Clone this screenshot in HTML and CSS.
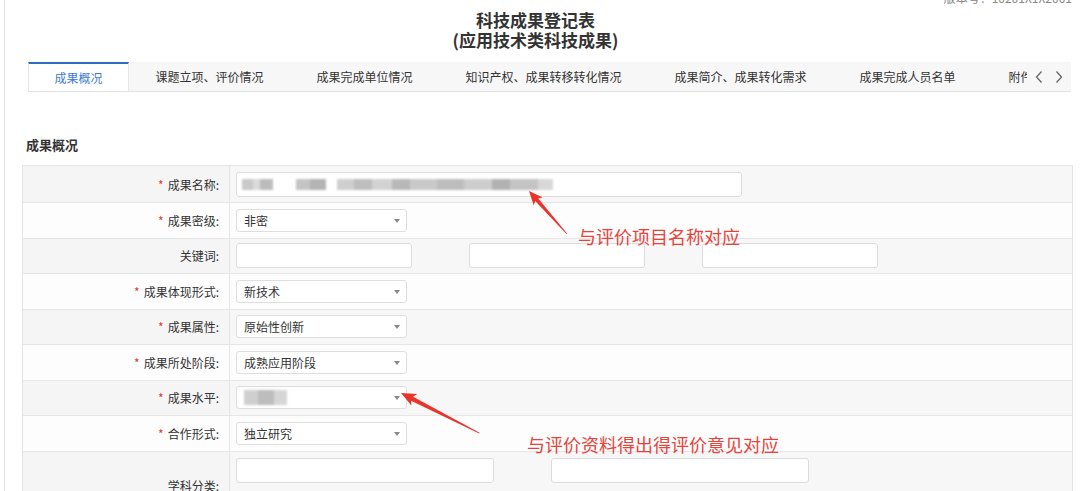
FILE: index.html
```html
<!DOCTYPE html>
<html lang="zh-CN">
<head>
  <meta charset="UTF-8" />
  <meta name="viewport" content="width=device-width, initial-scale=1.0"/>
  <title>科技成果登记表</title>
  <link rel="stylesheet" href="styles.css">
</head>
<body>
  <div class="page">
    <div class="version">版本号：10201X1X2001</div>

    <div class="title">
      <div>科技成果登记表</div>
      <div>(应用技术类科技成果)</div>
    </div>

    <div class="tabs">
      <div class="tab-list">
        <div class="tab active">成果概况</div>
        <div class="tab">课题立项、评价情况</div>
        <div class="tab">成果完成单位情况</div>
        <div class="tab">知识产权、成果转移转化情况</div>
        <div class="tab">成果简介、成果转化需求</div>
        <div class="tab">成果完成人员名单</div>
        <div class="tab">附件</div>
      </div>
      <div class="tab-arrows">
        <svg width="10" height="14" viewBox="0 0 10 14"><polyline points="7.5,1.5 2.5,7 7.5,12.5" /></svg>
        <svg width="10" height="14" viewBox="0 0 10 14"><polyline points="2.5,1.5 7.5,7 2.5,12.5" /></svg>
      </div>
    </div>

    <h3 class="section-title">成果概况</h3>

    <div class="form-table">
      <div class="row first gray">
        <div class="label"><span class="req">*</span>成果名称:</div>
        <div class="value">
          <div class="input name-input"><span class="mosaic"></span></div>
        </div>
      </div>
      <div class="row">
        <div class="label"><span class="req">*</span>成果密级:</div>
        <div class="value"><div class="select">非密</div></div>
      </div>
      <div class="row gray">
        <div class="label">关键词:</div>
        <div class="value">
          <div class="input kw"></div>
          <div class="input kw"></div>
          <div class="input kw"></div>
        </div>
      </div>
      <div class="row">
        <div class="label"><span class="req">*</span>成果体现形式:</div>
        <div class="value"><div class="select">新技术</div></div>
      </div>
      <div class="row gray">
        <div class="label"><span class="req">*</span>成果属性:</div>
        <div class="value"><div class="select">原始性创新</div></div>
      </div>
      <div class="row">
        <div class="label"><span class="req">*</span>成果所处阶段:</div>
        <div class="value"><div class="select">成熟应用阶段</div></div>
      </div>
      <div class="row gray">
        <div class="label"><span class="req">*</span>成果水平:</div>
        <div class="value"><div class="select"><span class="mosaic-small"></span></div></div>
      </div>
      <div class="row">
        <div class="label"><span class="req">*</span>合作形式:</div>
        <div class="value"><div class="select">独立研究</div></div>
      </div>
      <div class="row tall gray">
        <div class="label">学科分类:</div>
        <div class="value stack">
          <div class="line">
            <div class="input subj"></div>
            <div class="input subj"></div>
          </div>
          <div class="line">
            <div class="input subj"></div>
            <div class="input subj"></div>
          </div>
        </div>
      </div>
    </div>
  </div>

  <!-- annotations drawn on top of the screenshot -->
  <svg class="marks" width="1080" height="491" viewBox="0 0 1080 491">
    <g transform="translate(529 191) rotate(-131.5)">
      <polygon points="0,0 -14,-6 -11.5,-2 -57,-0.4 -57,0.4 -11.5,2 -14,6" />
    </g>
    <g transform="translate(401 393) rotate(-152.9)">
      <polygon points="0,0 -15,-6.5 -12.5,-2.2 -88,-0.5 -88,0.5 -12.5,2.2 -15,6.5" />
    </g>
  </svg>
  <div class="note note-name">与评价项目名称对应</div>
  <div class="note note-level">与评价资料得出得评价意见对应</div>
</body>
</html>
```

FILE: styles.css
```css
body {
  margin: 0;
  font-family: "Noto Sans CJK SC", "Liberation Sans", sans-serif;
  font-size: 12px;
  color: #333;
  background: #fff;
  overflow: hidden;
}
.page {
  position: relative;
  margin-left: 4px;
  border-left: 1px solid #e3e3e3;
  padding: 0 7px 0 17px;
  height: 491px;
  box-sizing: border-box;
}
.version {
  position: absolute;
  top: -9px;
  right: 8px;
  font-size: 12px;
  line-height: 14px;
  color: #888;
}
.title {
  padding: 10px 24px 0 0;
  height: 53px;
  box-sizing: border-box;
  text-align: center;
  font-size: 17px;
  font-weight: bold;
  line-height: 20px;
  color: #333;
}
.tabs {
  display: flex;
  margin: 9px 2px 0 6px;
  height: 29px;
  background: #f7f7f7;
  border-bottom: 1px solid #e2e2e2;
}
.tab-list {
  flex: 1;
  display: flex;
  overflow: hidden;
}
.tab {
  flex-shrink: 0;
  padding: 0 26.5px;
  line-height: 29px;
  white-space: nowrap;
  color: #333;
}
.tab.active {
  padding: 0 25.5px 1px;
  line-height: 27px;
  margin-bottom: -1px;
  background: #fff;
  color: #3b7bd3;
  border-top: 2px solid #2d6cc2;
  border-left: 1px solid #e6e6e6;
  border-right: 1px solid #e6e6e6;
}
.tab-arrows {
  width: 44px;
  display: flex;
  align-items: center;
  justify-content: center;
  gap: 10px;
}
.tab-arrows polyline {
  fill: none;
  stroke: #666;
  stroke-width: 1.3;
}
.section-title {
  margin: 43px 0 10px 4px;
  font-size: 13px;
  line-height: 20px;
  font-weight: bold;
  color: #333;
}
.form-table {
  border: 1px solid #e4e4e4;
  border-bottom: none;
}
.row {
  display: flex;
  height: 35.5px;
  box-sizing: border-box;
  border-bottom: 1px solid #e6e6e6;
  background: #fdfdfd;
}
.row.gray {
  background: #f7f7f8;
}
.row.first {
  height: 37px;
}
.row.tall {
  height: 68px;
}
.label {
  width: 207px;
  flex-shrink: 0;
  box-sizing: border-box;
  padding-right: 10px;
  border-right: 1px solid #e6e6e6;
  display: flex;
  align-items: center;
  justify-content: flex-end;
  color: #333;
}
.row.gray .label {
  background: #f5f5f5;
}
.req {
  color: #e03a2f;
  margin-right: 4px;
}
.value {
  flex: 1;
  display: flex;
  align-items: center;
  gap: 57px;
  padding-left: 6px;
}
.value.stack {
  flex-direction: column;
  align-items: flex-start;
  justify-content: flex-start;
  gap: 10px;
  padding-top: 6px;
}
.line {
  display: flex;
  gap: 57px;
}
.input {
  height: 25px;
  box-sizing: border-box;
  border: 1px solid #dcdcdc;
  border-radius: 3px;
  background: #fff;
}
.name-input {
  width: 506px;
  display: flex;
  align-items: center;
  padding-left: 5px;
}
.mosaic {
  width: 311px;
  height: 11px;
  filter: blur(0.8px);
  background: linear-gradient(90deg,
    #c9c9c9 0 11px, #dadada 11px 18px, #bcbcbc 18px 31px,
    transparent 31px 54px,
    #c4c4c4 54px 68px, #b4b4b4 68px 84px,
    transparent 84px 95px,
    #cfcfcf 95px 112px, #bebebe 112px 130px, #d2d2d2 130px 150px,
    #b8b8b8 150px 168px, #c9c9c9 168px 195px, #bdbdbd 195px 222px,
    #cdcdcd 222px 250px, #b2b2b2 250px 268px, #c4c4c4 268px 296px,
    #d8d8d8 296px 311px);
}
.mosaic-small {
  display: block;
  width: 43px;
  height: 15px;
  filter: blur(1px);
  background: linear-gradient(90deg, #cfcfcf 0 14px, #bdbdbd 14px 30px, #d6d6d6 30px 43px);
}
.kw {
  width: 176px;
}
.subj {
  width: 258px;
}
.select {
  position: relative;
  width: 171px;
  height: 23px;
  box-sizing: border-box;
  border: 1px solid #dedede;
  border-radius: 3px;
  background: #fff;
  padding-left: 7px;
  line-height: 21px;
  color: #333;
  display: flex;
  align-items: center;
}
.select::after {
  content: '';
  position: absolute;
  right: 6px;
  top: 9px;
  border-left: 3.5px solid transparent;
  border-right: 3.5px solid transparent;
  border-top: 4px solid #888;
}
.marks {
  position: absolute;
  left: 0;
  top: 0;
  pointer-events: none;
}
.marks polygon {
  fill: #e8342a;
}
.note {
  position: absolute;
  font-size: 18px;
  line-height: 20px;
  color: #e8433b;
  white-space: nowrap;
}
.note-name {
  left: 578px;
  top: 226px;
}
.note-level {
  left: 527px;
  top: 434px;
}
```
